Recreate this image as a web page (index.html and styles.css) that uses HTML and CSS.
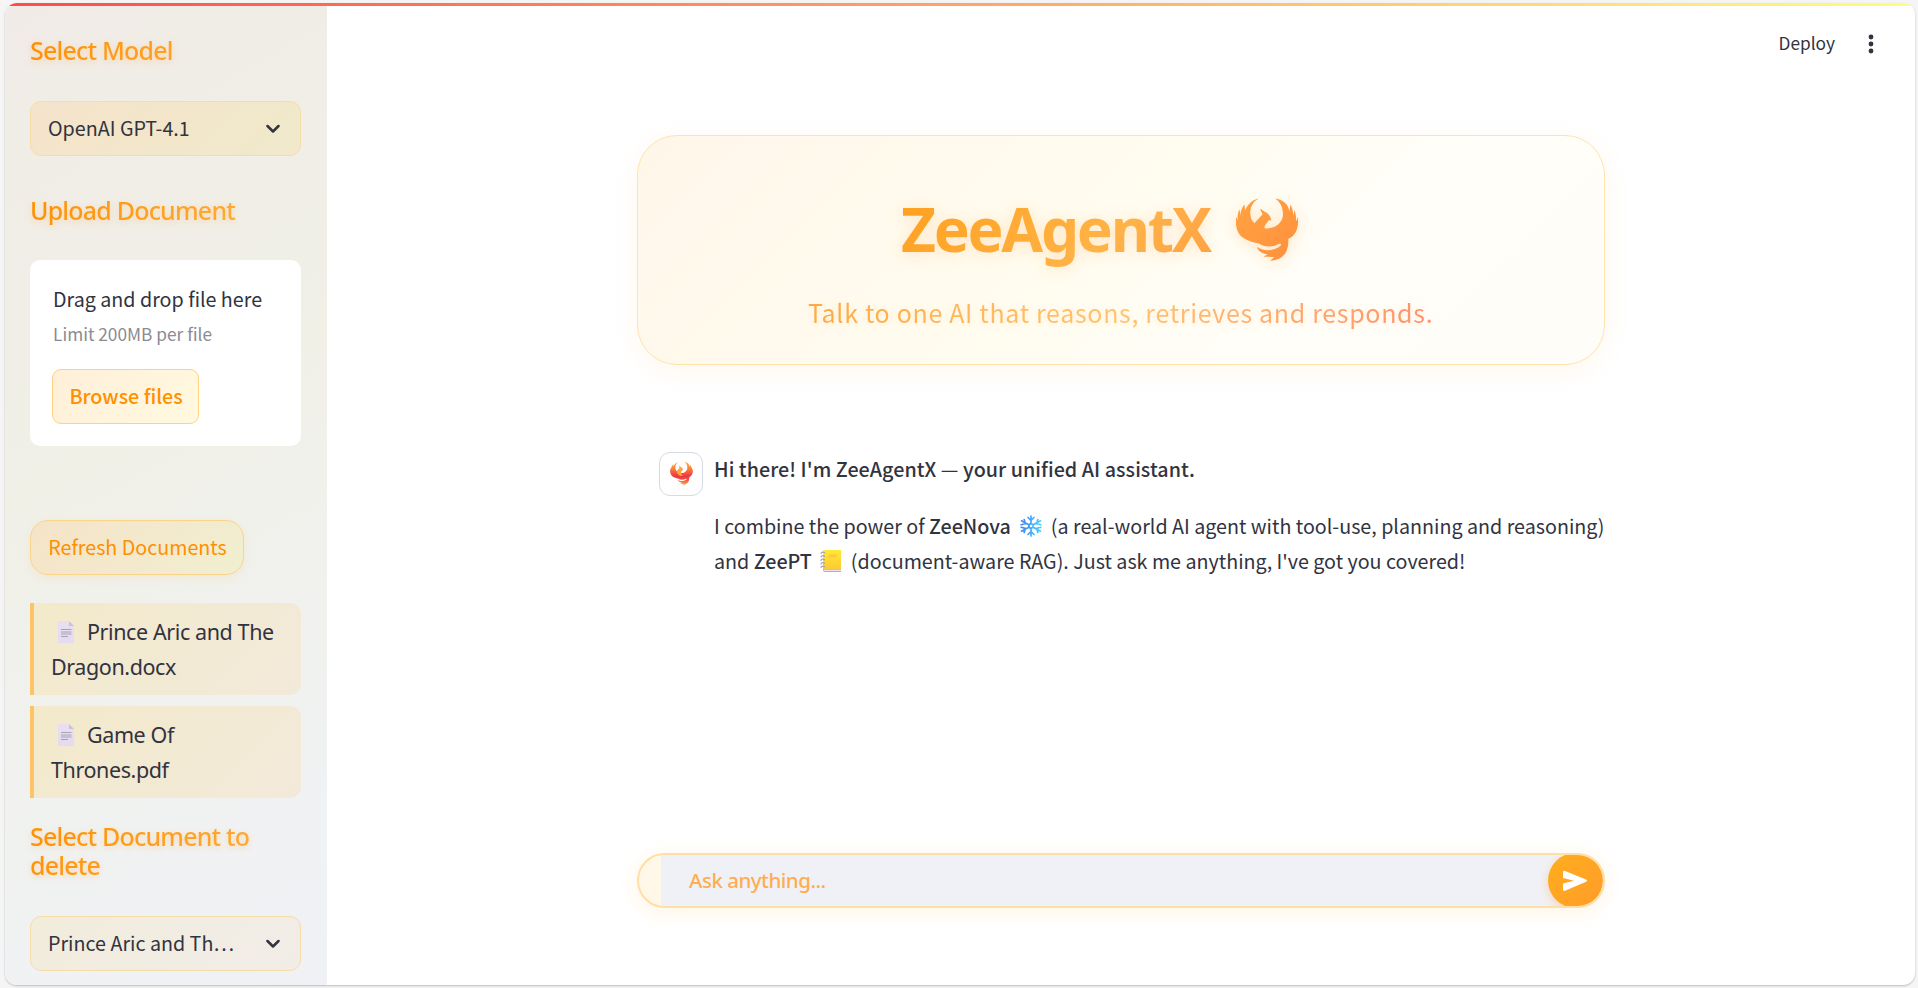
FILE: index.html
```html
<!DOCTYPE html>
<html lang="en">
<head>
<meta charset="utf-8">
<title>ZeeAgentX</title>
<link rel="stylesheet" href="styles.css">
</head>
<body>
<svg class="defs" width="0" height="0" aria-hidden="true">
  <defs>
    <linearGradient id="g-hero" x1="0" y1="0" x2="1" y2="1"><stop offset="0" stop-color="#ffa43f"/><stop offset="1" stop-color="#ff8f3f"/></linearGradient>
    <linearGradient id="g-fire" x1="0" y1="0" x2="0" y2="1"><stop offset="0" stop-color="#ffac38"/><stop offset=".3" stop-color="#fb7d38"/><stop offset=".62" stop-color="#ed3546"/><stop offset=".75" stop-color="#f05040"/><stop offset="1" stop-color="#ffa640"/></linearGradient>
    <linearGradient id="g-snow" x1="0" y1="0" x2="1" y2="0"><stop offset="0" stop-color="#3f86f5"/><stop offset="1" stop-color="#50cdfa"/></linearGradient>
    <linearGradient id="g-page" x1="0" y1="0" x2="0" y2="1"><stop offset="0" stop-color="#e8e0f0"/><stop offset="1" stop-color="#e4daf2"/></linearGradient>
    <linearGradient id="g-note" x1="0" y1="0" x2="0" y2="1"><stop offset="0" stop-color="#ffe834"/><stop offset="1" stop-color="#fccb35"/></linearGradient>
    <path id="phoenix" d="M417 236C385 250 385 297 403 310L427 284C428 278 420 274 421 267L437 277C447 281 452 292 454 302L446 301C440 312 430 319 434 325C460 330 488 312 489 285C489 262 480 245 465 236C490 238 507 256 508 276L511 254C517 264 520 277 520 289L523 271C530 286 527 298 529 304L534 291C536 322 530 345 505 357C506 385 500 420 450 423L463 412C450 411 440 412 430 410L443 404C430 402 414 396 411 381C430 397 465 393 483 376C484 371 478 371 473 374C460 382 430 382 417 371C405 369 395 367 385 362C358 350 345 335 348 291L353 301C352 290 353 278 359 269L361 287C362 275 365 262 374 254L375 272C383 252 400 238 417 236Z"/>
    <symbol id="doc" viewBox="0 0 18 22"><path fill="url(#g-page)" d="M1 0h11l5 5v17H1z"/><path fill="#cdc0d8" d="M12 0l5 5h-5z"/><path stroke="#aaa0b4" stroke-width="1" d="M4 8.500h10.500M4 11h10.500M4 13h10.500M4 15.500h7"/></symbol>
    <symbol id="chev" viewBox="0 0 14 10"><path fill="none" stroke="#31333f" stroke-width="2.500" stroke-linecap="round" stroke-linejoin="round" d="M1.500 2L7 7.500L12.500 2"/></symbol>
  </defs>
</svg>
<div class="window">
  <div class="decoration"></div>
  <div class="columns">
    <aside class="sidebar">
      <h2 class="heading"><span>Select Model</span></h2>
      <div class="select select-model"><span>OpenAI GPT-4.1</span><svg class="chev"><use href="#chev"/></svg></div>
      <h2 class="heading heading-upload"><span>Upload Document</span></h2>
      <div class="dropzone">
        <div class="drop-title">Drag and drop file here</div>
        <div class="drop-limit">Limit 200MB per file</div>
        <button class="browse">Browse files</button>
      </div>
      <button class="refresh">Refresh Documents</button>
      <div class="file"><svg class="doc"><use href="#doc"/></svg><span>Prince Aric and The<br>Dragon.docx</span></div>
      <div class="file"><svg class="doc"><use href="#doc"/></svg><span>Game Of<br>Thrones.pdf</span></div>
      <h2 class="heading heading-delete"><span>Select Document to<br>delete</span></h2>
      <div class="select select-doc"><span>Prince Aric and Th…</span><svg class="chev"><use href="#chev"/></svg></div>
    </aside>
    <main class="main">
      <header class="toolbar">
        <span class="deploy">Deploy</span>
        <svg class="dots" viewBox="0 0 6 20"><circle cx="3" cy="3" r="2.400"/><circle cx="3" cy="10" r="2.400"/><circle cx="3" cy="17" r="2.400"/></svg>
      </header>
      <section class="hero">
        <div class="title-row"><h1 class="title">ZeeAgentX</h1><svg class="bird" viewBox="348 235 186 188"><use href="#phoenix" fill="url(#g-hero)"/></svg></div>
        <p class="subtitle"><span>Talk to one AI that reasons, retrieves and responds.</span></p>
      </section>
      <section class="message">
        <div class="avatar"><svg width="23" height="23" viewBox="348 235 186 188"><use href="#phoenix" fill="url(#g-fire)"/><path fill="#ffa637" d="M403 310L427 284L421 267L437 277L454 302L446 301C430 320 440 340 452 350C420 352 404 330 403 310Z"/></svg></div>
        <div class="bubble">
          <p class="greet"><b>Hi there! I'm ZeeAgentX</b> — <b>your unified AI assistant.</b></p>
          <p class="line line-a"><span>I combine the power of <b>ZeeNova</b></span><svg class="emoji snow" viewBox="0 0 22 22"><g fill="none" stroke="url(#g-snow)" stroke-width="1.700" stroke-linecap="round"><circle cx="11" cy="11" r="2.200"/><path d="M11.010 1V8.500M8 2.500L11 5.500L14 2.500M11 21V13.500M8 19.500L11 16.500L14 19.500M1.500 5.800L8.800 9.700M1.200 9.700L5.300 8.600L4.200 4.500M20.500 16.200L13.200 12.300M20.800 12.300L16.700 13.400L17.800 17.500M20.500 5.800L13.200 9.700M20.800 9.700L16.700 8.600L17.800 4.500M1.500 16.200L8.800 12.300M1.200 12.300L5.300 13.400L4.200 17.500"/></g></svg><span>(a real-world AI agent with tool-use, planning and reasoning)</span></p>
          <p class="line line-b"><span>and <b>ZeePT</b></span><svg class="emoji note" viewBox="0 0 22 22"><path fill="#b7a5d8" d="M3 19h18v3H5q-2 0-2-3z"/><path fill="#eee4fa" d="M4 19.700h17v1.300H4z"/><path fill="url(#g-note)" d="M3 1q0-1 1-1h17v19H3z"/><path fill="#ffc83c" d="M8.500 4.500h8v3h-8z"/><path fill="none" stroke="#a5a0ad" stroke-width="1.200" d="M5 3q-4-2-4 1M5 6.500q-4-2-4 1M5 10q-4-2-4 1M5 13.500q-4-2-4 1M5 17q-4-2-4 1"/></svg><span>(document-aware RAG). Just ask me anything, I've got you covered!</span></p>
        </div>
      </section>
      <div class="chat-input">
        <div class="field"><span>Ask anything...</span></div>
        <button class="send" aria-label="Send"><svg width="26" height="22" viewBox="0 0 26 22"><path fill="#fff" d="M1 2.200Q1 .2 3 .9L24 9.600Q26 10.700 24 11.800L3 20.700Q1 21.500 1 19.500V13.500L12 10.700L1 8Z"/></svg></button>
      </div>
    </main>
  </div>
</div>
</body>
</html>
```
FILE: styles.css
```css
* { box-sizing: border-box; }
body { margin: 0; height: 988px; padding: 3px 3px 3px 5px; background: #f5f5f5; overflow: hidden; color: #31333f; font: 400 19.7px/35px "Noto Sans CJK SC", "Noto Sans", sans-serif; }
h1, h2, p { margin: 0; }
button { font: inherit; padding: 0; }
.defs { display: block; height: 0; }
span, .drop-title, .drop-limit, p { white-space: nowrap; }
.window { width: 1910px; height: 982px; border-radius: 12px; overflow: hidden; background: #fff; box-shadow: 0 1px 2px #bbb; }
.decoration { height: 3px; background: linear-gradient(90deg, #ff4b4b, #fffd80); }
.columns { display: flex; height: 979px; }

.sidebar { width: 322px; padding: 30px 26px 0 25px; background: linear-gradient(150deg, #f0ebe6 0%, #f0f0e7 42%, #f0f2f0 72%, #f0f1f6 100%); }
.heading { height: 29px; font: 500 25px/29px "Noto Sans", sans-serif; letter-spacing: -.8px; filter: drop-shadow(0 2px 3px rgba(255, 160, 40, .3)); }
.heading span { display: block; color: transparent; background: linear-gradient(135deg, #ff8f00, #ffb347); background-clip: text; -webkit-background-clip: text; }
.select { display: flex; align-items: center; justify-content: space-between; height: 55px; padding: 0 20px 0 17px; border: 1px solid #f6dca6; border-radius: 11px; }
.select span { margin-top: -3px; }
.select-model { margin-top: 36px; background: linear-gradient(135deg, #f5e3cb, #f0e9ca); }
.chev { width: 14px; height: 10px; }
.heading-upload { margin-top: 40px; }
.dropzone { height: 186px; margin-top: 35px; padding: 21px 22px 22px; border-radius: 10px; background: #fff; }
.drop-title { height: 35px; line-height: 35px; padding-left: 1px; }
.drop-limit { height: 35px; line-height: 35px; padding-left: 1px; font-size: 17.3px; color: #8a8b93; }
.browse { display: block; width: 147px; height: 55px; margin-top: 18px; padding: 0 0 2px 1px; border: 1px solid #ffd280; border-radius: 9px; background: linear-gradient(135deg, #ffefd8, #fff9e0); color: #ff8f00; font-weight: 500; }
.refresh { display: block; width: 214px; height: 55px; margin: 74px 0 28px; padding: 0 0 2px 1px; border: 1px solid #f9d48a; border-radius: 18px; background: linear-gradient(135deg, #f5e3c8, #f1efd0); color: #ff8f00; box-shadow: 0 3px 9px rgba(255, 170, 60, .13); }
.file { position: relative; height: 92px; margin-bottom: 11px; padding: 11px 0 0 17px; border-left: 4px solid #fbc565; border-radius: 0 11px 11px 0; background: linear-gradient(135deg, #f3eacb, #f2e9da); font: 400 21.5px/35px "Noto Sans", sans-serif; letter-spacing: -.4px; }
.file span { display: block; text-indent: 36px; }
.doc { position: absolute; left: 23px; top: 18px; width: 18px; height: 22px; }
.heading-delete { height: 58px; margin-top: 24px; }
.select-doc { margin-top: 36px; background: linear-gradient(135deg, #f1eddb, #f2ece8); }

.main { flex: 1; }
.toolbar { display: flex; align-items: center; justify-content: flex-end; gap: 33px; height: 76px; padding-right: 41px; font-size: 17.3px; }
.deploy { margin-top: -3px; }
.dots { width: 6px; height: 20px; fill: #31333f; }
.hero { width: 968px; height: 230px; margin: 53px 0 0 310px; padding-top: 49px; border: 1px solid #ffe2ac; border-radius: 40px; background: linear-gradient(135deg, #fff6ea 0%, #fffcef 42%, #fffef8 70%, #fffdf9 100%); box-shadow: 0 6px 26px rgba(255, 165, 60, .09); }
.title-row { display: flex; gap: 17px; height: 86px; padding-left: 263px; filter: drop-shadow(0 2px 8px rgba(255, 160, 60, .25)); }
.title { width: 318px; color: transparent; background: linear-gradient(135deg, #ff9f1c, #ffb347 65%, #ff9f45); background-clip: text; -webkit-background-clip: text; font: 700 60.500px/88px "Noto Sans", sans-serif; letter-spacing: -2.300px; white-space: nowrap; }
.bird { width: 62px; height: 63px; margin-top: 13px; }
.subtitle { height: 36px; margin: 23px 0 0 170px; font-size: 25px; line-height: 36px; letter-spacing: .67px; filter: drop-shadow(0 1px 5px rgba(255, 160, 60, .15)); }
.subtitle span { display: inline-block; color: transparent; background: linear-gradient(100deg, #ffa943, #ffc470 50%, #ff926b); background-clip: text; -webkit-background-clip: text; }
.message { display: flex; gap: 11px; height: 150px; margin: 87px 0 0 332px; }
.avatar { display: flex; align-items: center; justify-content: center; width: 44px; height: 44px; border: 1px solid #d8dae4; border-radius: 11px; }
.avatar svg { margin-top: -2px; }
.bubble { margin-top: -1px; }
b { font-weight: 500; }
.greet { height: 35px; margin-bottom: 22px; letter-spacing: .06px; }
.line { display: flex; align-items: center; height: 35px; }
.emoji { width: 22px; height: 22px; }
.snow { margin: 0 9px; }
.note { margin: 0 9px 0 8px; }
.chat-input { display: flex; width: 968px; height: 55px; margin: 251px 0 0 310px; padding-left: 22px; border: 2px solid #ffdfa5; border-radius: 28px; background: #fff7e8; overflow: hidden; box-shadow: 0 4px 20px rgba(255, 180, 50, .14); }
.field { flex: 1; padding-left: 28px; background: #f0f1f6; color: #ffad50; font: 500 20.500px/51px "Noto Sans", sans-serif; letter-spacing: -.5px; margin-right: -30px; }
.send { display: flex; align-items: center; justify-content: center; width: 55px; height: 55px; margin-top: -2px; padding-right: 2px; border: 0; border-radius: 50%; background: linear-gradient(135deg, #ffae1c, #ff9c2b); box-shadow: 0 3px 10px rgba(255, 160, 50, .35); }
```
